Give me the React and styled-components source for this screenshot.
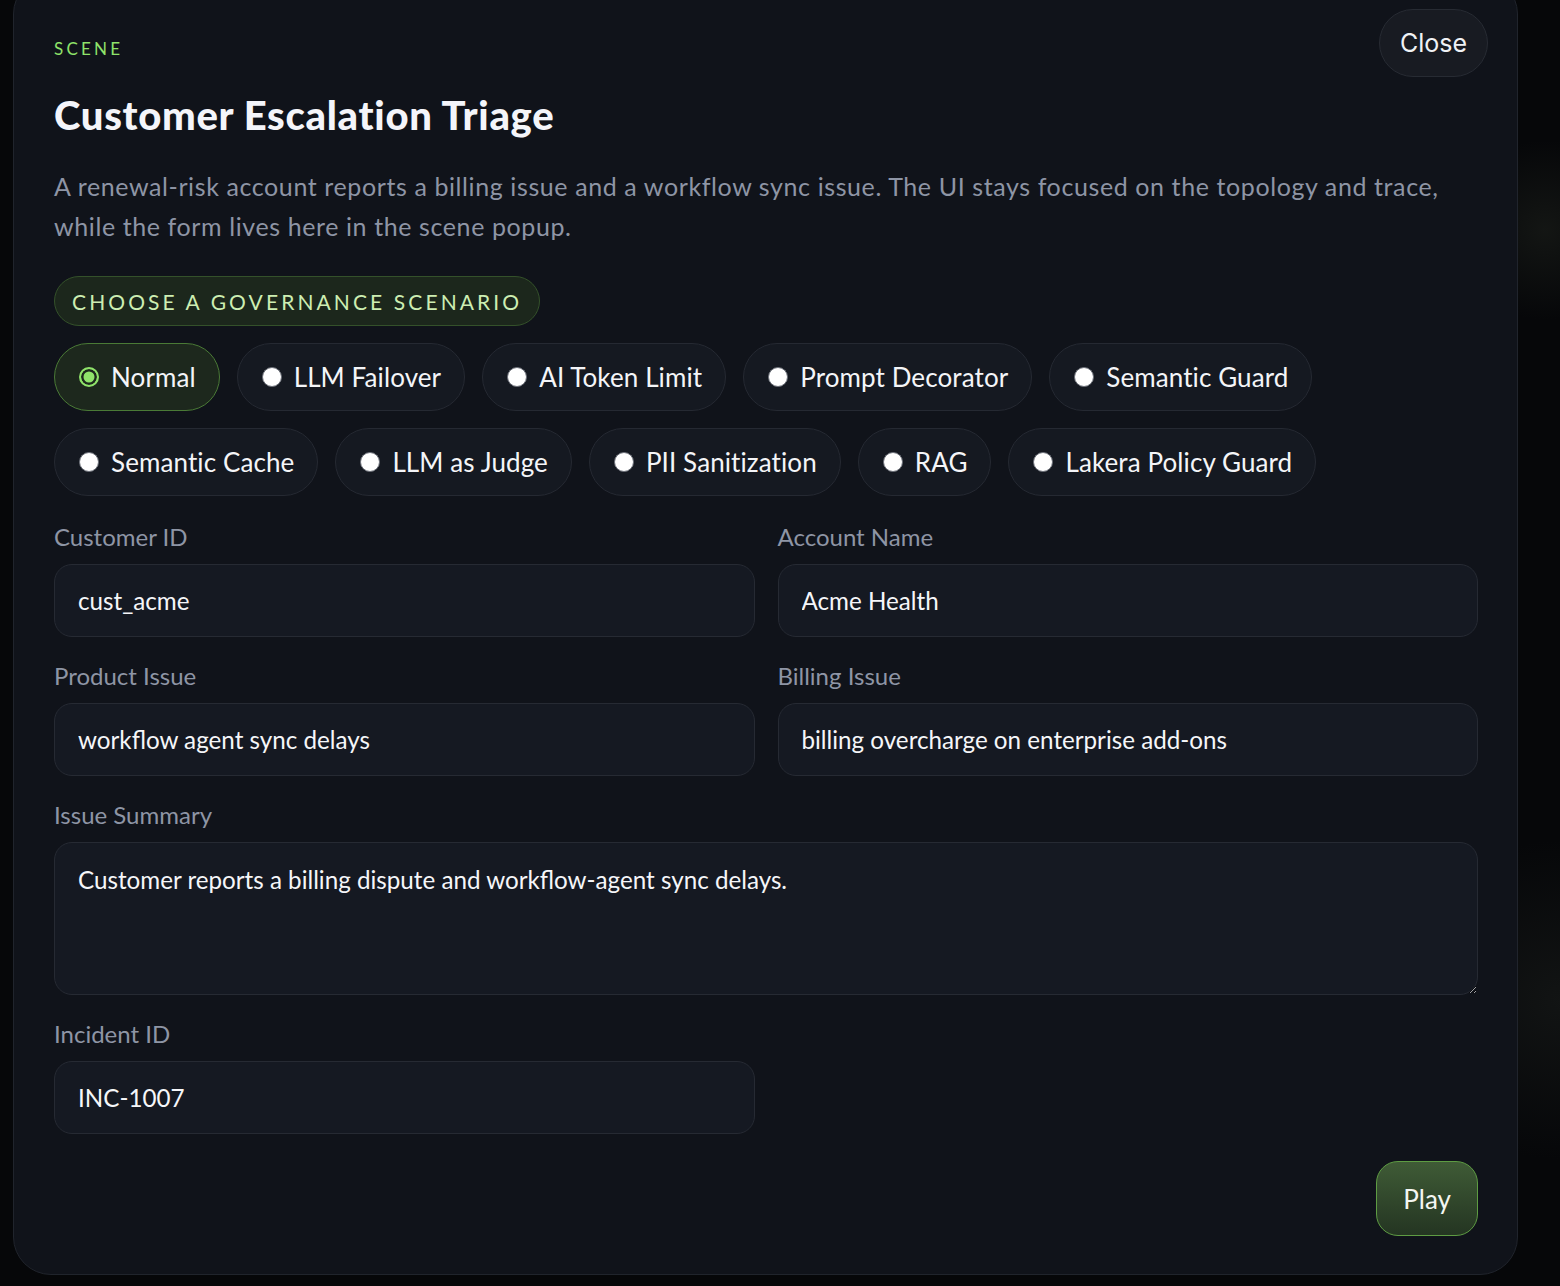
import React, { useState } from "react";
import styled, { createGlobalStyle } from "styled-components";

const GlobalStyle = createGlobalStyle`
  * { box-sizing: border-box; }
  html, body {
    margin: 0;
    padding: 0;
    background: #060709;
    font-family: "Lato", "Noto Sans", sans-serif;
    overflow: hidden;
  }
  body {
    background:
      radial-gradient(circle at 1545px 230px, rgba(60, 66, 52, 0.25), transparent 90px),
      radial-gradient(circle at 1560px 1000px, rgba(40, 44, 40, 0.35), transparent 160px),
      #060709;
    min-height: 1286px;
  }
`;

const Page = styled.div`
  width: 1560px;
  height: 1286px;
  padding-left: 13px;
`;

const Modal = styled.div`
  position: relative;
  width: 1505px;
  margin-top: -24px;
  padding: 60px 39px 38px 40px;
  background: #10131a;
  border: 1px solid #20242c;
  border-radius: 38px;
  color: #f2f4f8;
`;

const CloseButton = styled.button`
  position: absolute;
  top: 32px;
  right: 29px;
  height: 68px;
  padding: 0 20px;
  border-radius: 34px;
  background: #181b22;
  border: 1px solid #272b33;
  color: #f0f2f5;
  font-family: "Inter", sans-serif;
  font-size: 25px;
  cursor: pointer;
`;

const Eyebrow = styled.div`
  color: #8fe36a;
  font-size: 17px;
  letter-spacing: 3.2px;
  line-height: 24px;
`;

const Title = styled.h1`
  margin: 30px 0 0;
  font-size: 40px;
  font-weight: 900;
  letter-spacing: 0.7px;
  line-height: 48px;
  color: #f4f5fa;
`;

const Description = styled.p`
  margin: 27px 0 0;
  font-size: 25px;
  letter-spacing: 0.6px;
  line-height: 40px;
  color: #8e95a5;
`;

const SectionPill = styled.div`
  display: inline-flex;
  align-items: center;
  margin-top: 30px;
  height: 50px;
  padding: 0 17px;
  border-radius: 25px;
  background: #1c271c;
  border: 1px solid #34512a;
  color: #cdeeb2;
  font-size: 21px;
  letter-spacing: 3.1px;
`;

const RadioGroup = styled.div`
  display: flex;
  flex-wrap: wrap;
  gap: 17px 17px;
  margin-top: 17px;
  max-width: 1300px;
`;

const RadioPill = styled.label`
  display: inline-flex;
  align-items: center;
  gap: 12px;
  height: 68px;
  padding: 0 23px 0 24px;
  border-radius: 34px;
  background: ${(p) => (p.$active ? "#1d281d" : "#151921")};
  border: 1px solid ${(p) => (p.$active ? "#4a7a36" : "#252932")};
  color: #f4f5f8;
  font-size: 26px;
  letter-spacing: 0.1px;
  cursor: pointer;
`;

const Dot = styled.span`
  width: 20px;
  height: 20px;
  border-radius: 50%;
  flex-shrink: 0;
  background: ${(p) => (p.$active ? "#8fe36a" : "#ffffff")};
  border: ${(p) => (p.$active ? "2px solid #8fe36a" : "1.5px solid #6b6f78")};
  box-shadow: ${(p) => (p.$active ? "inset 0 0 0 2.5px #1d281d" : "none")};
`;

const Form = styled.div`
  display: grid;
  grid-template-columns: 1fr 1fr;
  column-gap: 23px;
  row-gap: 25px;
  margin-top: 27px;
`;

const Field = styled.div`
  display: flex;
  flex-direction: column;
  gap: 13px;
  grid-column: ${(p) => (p.$wide ? "1 / -1" : "auto")};
`;

const Label = styled.span`
  font-size: 24px;
  line-height: 28px;
  color: #8e95a5;
`;

const Input = styled.input`
  height: 73px;
  padding: 0 23px;
  border-radius: 18px;
  background: #151922;
  border: 1px solid #262a33;
  color: #f5f6f9;
  font-family: "Lato", sans-serif;
  font-size: 24.2px;
  outline: none;
`;

const TextArea = styled.textarea`
  height: 153px;
  padding: 22px 23px;
  border-radius: 18px;
  background: #151922;
  border: 1px solid #262a33;
  color: #f5f6f9;
  font-family: "Lato", sans-serif;
  font-size: 24.2px;
  line-height: 30px;
  outline: none;
  resize: vertical;
`;

const Footer = styled.div`
  display: flex;
  justify-content: flex-end;
  margin-top: 27px;
`;

const PlayButton = styled.button`
  height: 75px;
  padding: 0 26px;
  border-radius: 22px;
  background: linear-gradient(180deg, #3f5b36 0%, #243522 100%);
  border: 1.5px solid #5e9c43;
  color: #f4f6f2;
  font-family: "Lato", sans-serif;
  font-size: 26px;
  cursor: pointer;
`;

const scenarios = [
  "Normal",
  "LLM Failover",
  "AI Token Limit",
  "Prompt Decorator",
  "Semantic Guard",
  "Semantic Cache",
  "LLM as Judge",
  "PII Sanitization",
  "RAG",
  "Lakera Policy Guard",
];

export default function App() {
  const [scenario, setScenario] = useState("Normal");

  return (
    <>
      <GlobalStyle />
      <Page>
        <Modal>
          <CloseButton>Close</CloseButton>
          <Eyebrow>SCENE</Eyebrow>
          <Title>Customer Escalation Triage</Title>
          <Description>
            A renewal-risk account reports a billing issue and a workflow sync
            issue. The UI stays focused on the topology and trace, while the
            form lives here in the scene popup.
          </Description>
          <SectionPill>CHOOSE A GOVERNANCE SCENARIO</SectionPill>
          <RadioGroup>
            {scenarios.map((s) => (
              <RadioPill
                key={s}
                $active={scenario === s}
                onClick={() => setScenario(s)}
              >
                <Dot $active={scenario === s} />
                {s}
              </RadioPill>
            ))}
          </RadioGroup>
          <Form>
            <Field>
              <Label>Customer ID</Label>
              <Input defaultValue="cust_acme" />
            </Field>
            <Field>
              <Label>Account Name</Label>
              <Input defaultValue="Acme Health" />
            </Field>
            <Field>
              <Label>Product Issue</Label>
              <Input defaultValue="workflow agent sync delays" />
            </Field>
            <Field>
              <Label>Billing Issue</Label>
              <Input defaultValue="billing overcharge on enterprise add-ons" />
            </Field>
            <Field $wide>
              <Label>Issue Summary</Label>
              <TextArea defaultValue="Customer reports a billing dispute and workflow-agent sync delays." />
            </Field>
            <Field>
              <Label>Incident ID</Label>
              <Input defaultValue="INC-1007" />
            </Field>
          </Form>
          <Footer>
            <PlayButton>Play</PlayButton>
          </Footer>
        </Modal>
      </Page>
    </>
  );
}
